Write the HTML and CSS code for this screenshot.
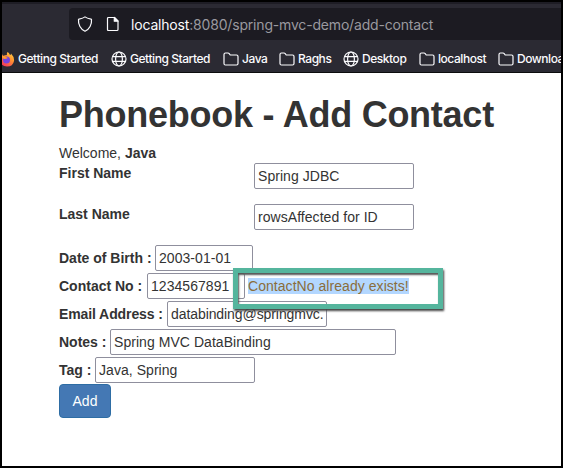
FILE: index.html
```html
<!DOCTYPE html>
<html lang="en">
<head>
<meta charset="utf-8">
<title>Phonebook - Add Contact</title>
<link rel="stylesheet" href="styles.css">
</head>
<body>
<svg width="0" height="0" class="defs">
  <symbol id="folder" viewBox="0 0 16 16"><path d="M1 12.500v-9Q1 2 2.500 2H5q.7 0 1.200.6L7.200 4H13.500Q15 4 15 5.500v7Q15 14 13.500 14h-11Q1 14 1 12.500z"/></symbol>
  <symbol id="globe" viewBox="0 0 16 16"><circle cx="8" cy="8" r="7"/><ellipse cx="8" cy="8" rx="3.400" ry="7"/><path d="M1.500 5.600h13M1.500 10.400h13"/></symbol>
</svg>
<div class="window">
  <header class="chrome">
    <div class="urlbar">
      <svg class="icon shield" viewBox="0 0 16 16"><path d="M8 .9C10 2.500 12.600 2.900 14.500 3.300C15 8.500 12.400 13.500 8 15.300C3.600 13.500 1 8.500 1.500 3.300C3.400 2.900 6 2.500 8 .9z"/></svg>
      <svg class="icon page" viewBox="0 0 14 16"><path d="M2.500 1.500H8.500L12 5V13.500Q12 14.500 11 14.500H2.500Q1.500 14.500 1.500 13.500V2.500Q1.500 1.500 2.500 1.500z"/><path class="fold" d="M8.300 1.500V5.200H12z"/></svg>
      <div class="url"><b>localhost</b>:8080/spring-mvc-demo/add-contact</div>
    </div>
    <nav class="bookmarks">
      <a class="bm w0"><svg class="fox" viewBox="0 0 16 16"><defs><linearGradient id="fx" x1="1" y1="0" x2="0.300" y2="1"><stop offset="0" stop-color="#ffe14a"/><stop offset=".45" stop-color="#ff9430"/><stop offset="1" stop-color="#f5365c"/></linearGradient></defs><path fill="url(#fx)" d="M8.500 1Q10 1.500 11 4Q12 4 12 2.500Q15.500 6 15 10Q14 15.500 8 15.500Q1 15 1 8Q1 5 3 3L4 5Q6 4 8 4Q7.500 2.500 8.500 1z"/><circle cx="7.500" cy="9" r="3.500" fill="#7543df"/><path fill="#ff9b2e" d="M2 5Q5 4 7 6L9 7Q7 8 5 8z"/></svg>Getting Started</a>
      <a class="bm w1"><svg class="icon"><use href="#globe"/></svg>Getting Started</a>
      <a class="bm w2"><svg class="icon"><use href="#folder"/></svg>Java</a>
      <a class="bm w3"><svg class="icon"><use href="#folder"/></svg>Raghs</a>
      <a class="bm w4"><svg class="icon"><use href="#globe"/></svg>Desktop</a>
      <a class="bm w5"><svg class="icon"><use href="#folder"/></svg>localhost</a>
      <a class="bm w6"><svg class="icon"><use href="#folder"/></svg>Downloads</a>
    </nav>
  </header>
  <main class="content">
    <h1>Phonebook - Add Contact</h1>
    <p class="welcome">Welcome, <b>Java</b></p>
    <form>
      <div class="wide first"><label>First Name</label><input class="m" value="Spring JDBC"></div>
      <div class="wide last"><label>Last Name</label><input class="m" value="rowsAffected for ID"></div>
      <div class="row"><label class="l-dob">Date of Birth :</label><input class="s" value="2003-01-01"></div>
      <div class="row"><label class="l-contact">Contact No :</label><input class="s" value="1234567891"><span class="error"><mark>ContactNo already exists!</mark><i class="callout"></i></span></div>
      <div class="row"><label class="l-email">Email Address :</label><input class="m email" value="databinding@springmvc.com"></div>
      <div class="row"><label class="l-notes">Notes :</label><input class="l" value="Spring MVC DataBinding"></div>
      <div class="row"><label class="l-tag">Tag :</label><input class="m" value="Java, Spring"></div>
      <button type="button">Add</button>
    </form>
  </main>
</div>
</body>
</html>
```
FILE: styles.css
```css
* { box-sizing: border-box; }
body { margin: 0; font: 14px/20px "Liberation Sans", Arial, sans-serif; color: #333; }
.defs { position: absolute; }
.window { width: 563px; height: 468px; border: 2px solid #000; background: #fff; overflow: hidden; }
.chrome { height: 71px; background: #2b2a33; border-top: 2px solid #1e1d25; border-bottom: 1px solid #0c0c0d; font-family: Inter, sans-serif; color: #fbfbfe; padding-top: 4px; }
.urlbar { margin-left: 67px; height: 32px; background: #1c1b22; border-radius: 4px 0 0 4px; display: flex; align-items: center; padding-left: 8px; }
.icon { width: 16px; height: 16px; flex: none; fill: none; stroke: #fbfbfe; stroke-width: 1.2; stroke-linejoin: round; }
.page { width: 14px; margin-left: 13px; }
.fold { fill: #fbfbfe; }
.url { margin-left: 11px; font-size: 14px; letter-spacing: -0.18px; color: #9a999f; white-space: nowrap; padding-top: 1px; }
.url b { color: #fbfbfe; font-weight: 400; }
.bookmarks { display: flex; height: 30px; align-items: center; padding-top: 7px; margin-left: -3px; font-size: 12px; font-weight: 500; letter-spacing: -0.45px; }
.bm { display: flex; align-items: center; gap: 3px; flex: none; white-space: nowrap; }
.fox { width: 16px; height: 16px; flex: none; }
.w0 { width: 112px; }
.w1 { width: 112px; }
.w2 { width: 56px; }
.w3 { width: 64px; }
.w4 { width: 76px; }
.w5 { width: 79px; }
.content { padding: 22px 0 0 57px; }
h1 { margin: 0 0 8px; font-size: 36px; line-height: 40px; font-weight: 700; letter-spacing: -0.25px; white-space: nowrap; }
.welcome { margin: 0; }
.wide { display: flex; height: 41px; }
.last { height: 40px; }
.wide label { width: 195px; }
label { font-weight: 700; white-space: nowrap; flex: none; }
input { display: block; height: 26px; padding: 1px 3px; border: 1px solid #8f8f9d; border-radius: 2px; font: inherit; letter-spacing: 0.05px; color: #333; background: #fff; }
.s { width: 98px; }
.m { width: 160px; }
.l { width: 286px; }
.email { letter-spacing: -0.08px; }
.row { display: flex; align-items: center; height: 28px; }
.l-dob { width: 96px; }
.l-contact { width: 88px; }
.l-email { width: 108px; letter-spacing: -0.1px; }
.l-notes { width: 51px; }
.l-tag { width: 36px; }
.error { position: relative; margin-left: 3px; line-height: 16px; }
mark { background: #b3d7ff; color: #8a6d3b; letter-spacing: 0.05px; }
.callout { position: absolute; left: -15px; top: -10px; width: 210px; height: 41px; border: 5px solid #55b59d; box-shadow: 1px 2px 2px #444, inset 1px 2px 2px #555; }
button { display: block; width: 52px; height: 34px; border: 1px solid #2e6da4; border-radius: 4px; background: #4478b4; color: #fff; font: inherit; padding: 0; }
```
